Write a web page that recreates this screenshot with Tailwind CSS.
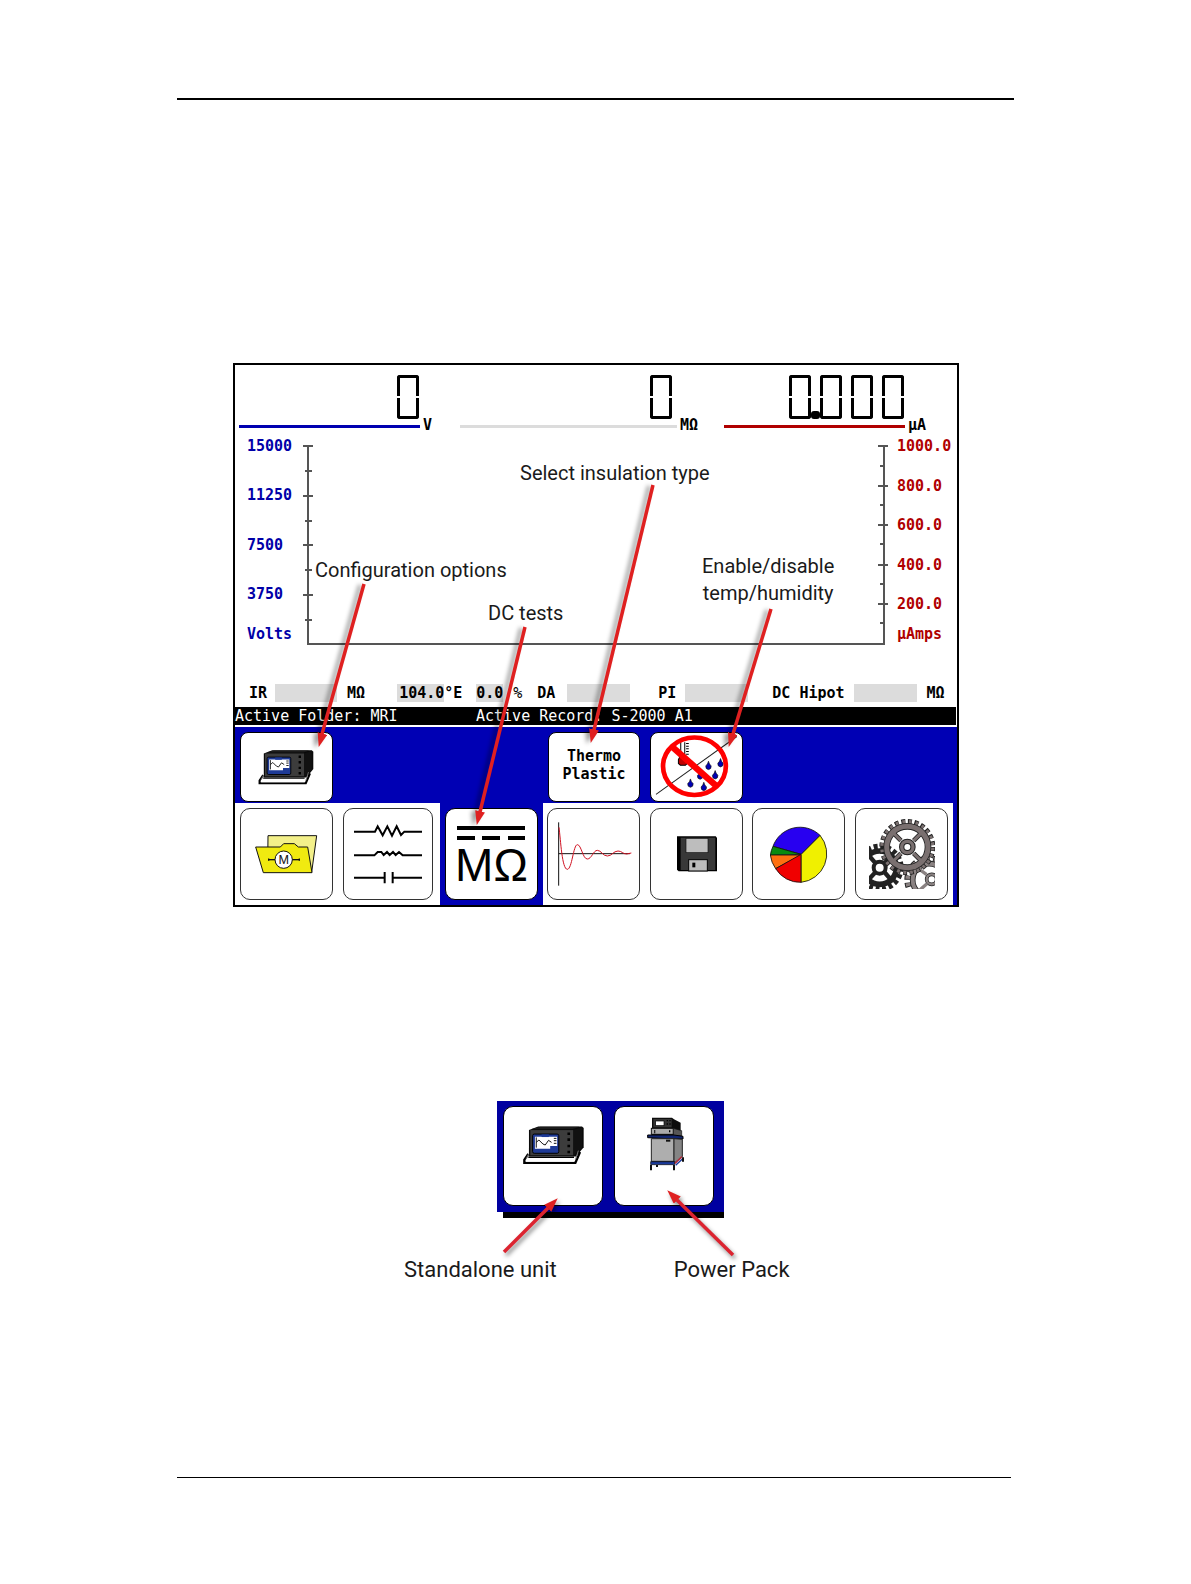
<!DOCTYPE html>
<html lang="en">
<head>
<meta charset="utf-8">
<meta name="viewport" content="width=device-width, initial-scale=1">
<title>DC tests screen</title>
<script src="https://cdn.jsdelivr.net/npm/@tailwindcss/browser@4"></script>
</head>
<body class="bg-white text-black">
<!-- Shared drawings -->
<svg class="absolute w-0 h-0" aria-hidden="true">
  <defs>
    <symbol id="tester" viewBox="130 103 184 120">
      <path d="M148 118 L176 107 H308 L313 112 V170 L290 198 H148Z" fill="#0a0a0a"/>
      <rect x="152" y="118" width="130" height="76" fill="#3c3c3c"/>
      <path d="M282 118 L308 110 V172 L282 196Z" fill="#111"/>
      <path d="M156 115 H280 L300 108 H182Z" fill="#1b1b1b"/>
      <rect x="159" y="130" width="79" height="58" rx="5" fill="#1e3a96" stroke="#000" stroke-width="3"/>
      <path d="M166 138 H233 V166 H212 V174 H166Z" fill="#fff"/>
      <path d="M186 131 h22 v8 h-22z" fill="#1e3a96"/>
      <path d="M170 140 V171 M170 155 L178 148 L190 160 L197 163 L207 149 L216 155" fill="none" stroke="#111" stroke-width="3"/>
      <path d="M223 143 h8 M223 150 h8 M223 158 h8" stroke="#111" stroke-width="3"/>
      <path d="M268 125 v8 M268 143 v8 M268 162 v8 M268 180 v8" stroke="#000" stroke-width="8"/>
      <path d="M146 190 L134 208 V217 H288 L302 184" fill="none" stroke="#000" stroke-width="7"/>
      <path d="M146 200 H284" stroke="#000" stroke-width="4"/>
      <path d="M139 209 H284" stroke="#fff" stroke-width="9"/>
      <path d="M147 190 l-8 16 M297 180 l-9 28" stroke="#777" stroke-width="3"/>
    </symbol>
    <marker id="head" markerUnits="userSpaceOnUse" markerWidth="16" markerHeight="12" refX="13" refY="5" orient="auto">
      <path d="M0 0 L14 5 L0 10Z" fill="#df2020"/>
    </marker>
  </defs>
</svg>

<div class="min-h-screen flex flex-col px-[177px] pt-[98px] pb-[106px]">
  <hr class="border-0 h-[2px] bg-black">

  <main>
    <figure class="relative mt-[263px] ml-14 max-w-[726px] border-2 border-black bg-white font-['DejaVu_Sans_Mono',monospace] text-[15px] leading-[18px] font-bold">

      <!-- Meters -->
      <section class="grid grid-cols-[221fr_264fr_233fr] pt-[10px] pl-[4px]">
        <div class="flex items-end">
          <div class="w-[181px] mb-[6px]">
            <div class="flex justify-end pr-[1px]" role="img" aria-label="0">
              <div class="w-[22px] h-11 flex flex-col gap-[2px]"><i class="flex-1 border-3 border-b-0 border-black rounded-t-[3px]"></i><i class="flex-1 border-3 border-t-0 border-black rounded-b-[3px]"></i></div>
            </div>
            <div class="mt-[6px] h-[3px] bg-[#0000b0]"></div>
          </div>
          <span class="ml-[3px]">V</span>
        </div>
        <div class="flex items-end">
          <div class="w-[217px] mb-[6px]">
            <div class="flex justify-end pr-[5px]" role="img" aria-label="0">
              <div class="w-[22px] h-11 flex flex-col gap-[2px]"><i class="flex-1 border-3 border-b-0 border-black rounded-t-[3px]"></i><i class="flex-1 border-3 border-t-0 border-black rounded-b-[3px]"></i></div>
            </div>
            <div class="mt-[6px] h-[3px] bg-[#dcdcdc]"></div>
          </div>
          <span class="ml-[3px]">MΩ</span>
        </div>
        <div class="flex items-end">
          <div class="w-[181px] mb-[6px]">
            <div class="relative flex justify-end gap-[9px] pr-[1px]" role="img" aria-label="0.000">
              <div class="w-[22px] h-11 flex flex-col gap-[2px]"><i class="flex-1 border-3 border-b-0 border-black rounded-t-[3px]"></i><i class="flex-1 border-3 border-t-0 border-black rounded-b-[3px]"></i></div>
              <div class="w-[22px] h-11 flex flex-col gap-[2px]"><i class="flex-1 border-3 border-b-0 border-black rounded-t-[3px]"></i><i class="flex-1 border-3 border-t-0 border-black rounded-b-[3px]"></i></div>
              <div class="w-[22px] h-11 flex flex-col gap-[2px]"><i class="flex-1 border-3 border-b-0 border-black rounded-t-[3px]"></i><i class="flex-1 border-3 border-t-0 border-black rounded-b-[3px]"></i></div>
              <div class="w-[22px] h-11 flex flex-col gap-[2px]"><i class="flex-1 border-3 border-b-0 border-black rounded-t-[3px]"></i><i class="flex-1 border-3 border-t-0 border-black rounded-b-[3px]"></i></div>
              <b class="absolute right-[85px] bottom-0 w-[9px] h-2 rounded-[3px] bg-black"></b>
            </div>
            <div class="mt-[6px] h-[3px] bg-[#b00000]"></div>
          </div>
          <span class="ml-[3px]">µA</span>
        </div>
      </section>

      <!-- Chart -->
      <section class="flex items-start mt-[3px] pl-3">
        <div class="w-[54px] text-[#0000a8]">
          <div class="h-[166px] flex flex-col justify-between"><span>15000</span><span>11250</span><span>7500</span><span>3750</span></div>
          <div class="mt-[22px]">Volts</div>
        </div>
        <svg class="flex-1 h-[211px]" viewBox="301 437 589 211" preserveAspectRatio="none" fill="none" stroke="#555" stroke-width="2" shape-rendering="crispEdges" role="img" aria-label="Voltage and current axes">
          <path d="M308 446 V644 H884 V446"/>
          <path d="M303 446h10 M303 496h10 M303 545h10 M303 595h10 M305 471h7 M305 521h7 M305 570h7 M305 620h7"/>
          <path d="M878 446h10 M878 486h10 M878 525h10 M878 565h10 M878 604h10 M880 466h4 M880 505h4 M880 544h4 M880 584h4 M880 623h4"/>
        </svg>
        <div class="w-[67px] pl-[7px] text-[#b00000]">
          <div class="h-[176px] flex flex-col justify-between"><span>1000.0</span><span>800.0</span><span>600.0</span><span>400.0</span><span>200.0</span></div>
          <div class="mt-3">µAmps</div>
        </div>
      </section>

      <!-- Readings -->
      <section class="flex mt-9 pl-[14px] whitespace-nowrap">
        <span>IR</span><span class="ml-2 w-[62px] h-[18px] bg-[#dcdcdc]"></span><span class="ml-[10px]">MΩ</span>
        <span class="ml-8 w-[47px] pl-[2px] bg-[#dcdcdc]">104.0</span><span>°E</span>
        <span class="ml-[14px] w-[27px] bg-[#dcdcdc]">0.0</span><span class="ml-[10px] font-normal">%</span>
        <span class="ml-[15px]">DA</span><span class="ml-3 w-[63px] bg-[#dcdcdc]"></span>
        <span class="ml-7">PI</span><span class="ml-[9px] w-[63px] bg-[#dcdcdc]"></span>
        <span class="ml-6">DC Hipot</span><span class="ml-[9px] w-[63px] bg-[#dcdcdc]"></span>
        <span class="ml-[10px]">MΩ</span>
      </section>

      <!-- Status line -->
      <section class="flex mt-[5px] mr-px h-[18px] bg-black text-white font-normal">
        <span class="w-[241px]">Active Folder: MRI</span><span>Active Record: S-2000 A1</span>
      </section>

      <!-- Option buttons -->
      <div class="mt-[2px] bg-[#0000b4]">
        <div class="grid grid-cols-7 mr-1 h-[76px]">
          <div class="p-[5px] pb-1"><button class="size-full flex items-center justify-center rounded-lg border border-black bg-white" aria-label="Standalone unit configuration"><svg class="w-14 h-9"><use href="#tester"/></svg></button></div>
          <div class="col-start-4 p-[5px] pb-1"><button class="size-full rounded-lg border border-black bg-white pb-1">Thermo<br>Plastic</button></div>
          <div class="p-[5px] pb-1"><button class="size-full rounded-lg border border-black bg-white overflow-hidden" aria-label="Temperature and humidity disabled">
            <svg class="size-full" viewBox="33 39 271 196">
              <path d="M48 218 L290 45" stroke="#222" stroke-width="3"/>
              <path d="M122 62 V106 M134 62 V106" stroke="#000" stroke-width="3"/>
              <path d="M138 66h8 M138 74h8 M138 82h8 M138 90h8 M138 98h8" stroke="#000" stroke-width="3"/>
              <path d="M119 106 h18 l4 8 v12 l-5 5 h-15 l-6 -5 v-12z" fill="#c00000" stroke="#000" stroke-width="3"/>
              <g fill="#0000b4" stroke="#111" stroke-width="2">
                <path id="drop" d="M151 172 q2 9 8 14 q1 10 -8 11 q-9 -1 -8 -11 q6 -5 8 -14z"/>
                <use href="#drop" x="40" y="10"/><use href="#drop" x="54" y="-53"/><use href="#drop" x="90" y="-61"/><use href="#drop" x="74" y="-25"/><use href="#drop" x="29" y="-24"/>
              </g>
              <ellipse cx="163" cy="134" rx="94" ry="86" fill="none" stroke="#f00" stroke-width="14"/>
              <path d="M94 74 L230 194" stroke="#f00" stroke-width="19"/>
            </svg></button></div>
        </div>
      </div>

      <!-- Mode tabs -->
      <nav class="bg-[#0000b4] pr-1 h-[102px]">
        <div class="grid grid-cols-7 h-full">
          <div class="bg-white p-[5px]"><button class="size-full flex items-center justify-center rounded-[10px] border border-[#333]" aria-label="Motor folder">
            <svg class="w-16 h-10" viewBox="69 342 192 120" stroke="#111" stroke-width="3">
              <path d="M111 347 H257 L242 457 L110 440Z" fill="#f3f08a"/>
              <path d="M74 381 H148 L158 371 H190 L202 381 H230 L243 458 H97Z" fill="#f0ea10"/>
              <path d="M112 419 H206" stroke-width="4"/><path d="M111 419h4 M203 419h4" stroke-width="7"/>
              <circle cx="158" cy="419" r="26" fill="#fff"/>
              <text x="158" y="432" text-anchor="middle" font-family="Liberation Sans, sans-serif" font-size="38" font-weight="400" fill="#111" stroke="none">M</text>
            </svg></button></div>
          <div class="bg-white p-[5px] pr-[7px]"><button class="size-full flex items-center justify-center rounded-[10px] border border-[#333]" aria-label="Passive components">
            <svg class="w-[68px] h-[60px]" viewBox="373 312 204 180" fill="none" stroke="#000" stroke-width="6">
              <path d="M373 335 H436 L444 319 L459 346 L473 319 L487 347 L501 319 L514 345 L524 335 H577"/>
              <path d="M373 406 H434 L444 396 L455 396 L462 405 L472 396 L480 405 L490 396 L498 405 L508 396 L519 406 H577"/>
              <path d="M373 473 H464 M490 473 H577"/><path d="M465 456 V490 M489 456 V490" stroke-width="6"/>
            </svg></button></div>
          <div class="p-[5px]"><button class="size-full flex flex-col items-center pt-4 rounded-[10px] border border-black bg-white font-['Liberation_Sans',sans-serif] font-normal">
            <svg class="w-[68px] h-[15px]" viewBox="0 0 68 15" stroke="#000" stroke-width="4" aria-hidden="true"><path d="M0 3H68 M0 13H18 M25 13H43 M51 13H68"/></svg>
            <span class="text-[46px] leading-[50px]">MΩ</span></button></div>
          <div class="bg-white p-[5px] pl-1"><button class="size-full flex items-center justify-center pl-1 rounded-[10px] border border-[#333]" aria-label="Surge waveform">
            <svg class="w-[74px] h-16" viewBox="368 306 222 192" fill="none" stroke-width="3">
              <path d="M370 307 V497 M370 401 H584" stroke="#111"/>
              <path d="M371 322 C376 360 380 448 396 448 C410 448 414 374 426 374 C438 374 442 417 456 417 C469 417 474 391 486 391 C498 391 502 408 516 408 C530 408 534 393 548 393 C560 393 562 402 574 402 L588 399" stroke="#d01020"/>
            </svg></button></div>
          <div class="bg-white p-[5px]"><button class="size-full flex items-center justify-center rounded-[10px] border border-[#333]" aria-label="Save">
            <svg class="w-10 h-9" viewBox="108 350 120 108">
              <path d="M108 351 H224 L228 355 V456 H113 L108 451Z" fill="#000"/><rect x="119" y="355" width="104" height="97" fill="#383838"/>
              <rect x="135" y="357" width="66" height="43" fill="#bdbdbd" stroke="#111" stroke-width="2"/>
              <rect x="143" y="421" width="56" height="34" fill="#bdbdbd" stroke="#000" stroke-width="3"/><rect x="154" y="430" width="9" height="14" fill="#000"/>
            </svg></button></div>
          <div class="bg-white p-[5px] pl-1"><button class="size-full flex items-center justify-center rounded-[10px] border border-[#333]" aria-label="Reports">
            <svg class="size-[58px]" viewBox="75 315 174 174" stroke="#111" stroke-width="2.5">
              <path d="M168 403 L225 346 A86 86 0 0 1 168 487Z" fill="#f0f000"/>
              <path d="M168 403 L84 379 A86 86 0 0 1 225 346Z" fill="#2800f0"/>
              <path d="M168 403 L76 406 A86 86 0 0 1 84 379Z" fill="#0a8a10"/>
              <path d="M168 405 L92 446 A86 86 0 0 1 76 405Z" fill="#ff7010"/>
              <path d="M168 403 V487 A86 86 0 0 1 92 446Z" fill="#f00000"/>
            </svg></button></div>
          <div class="bg-white p-[5px]"><button class="size-full flex items-center justify-center rounded-[10px] border border-[#333]" aria-label="Settings">
            <svg class="w-[66px] h-[70px]" viewBox="372 299 198 210" fill="none">
              <g stroke="#222">
                <circle cx="404" cy="445" r="64" stroke-width="16" stroke-dasharray="12 8.1"/>
                <circle cx="404" cy="445" r="50" stroke-width="17"/>
                <circle cx="404" cy="445" r="18" stroke-width="12"/>
                <path d="M392 432 L366 402 M418 432 L444 402 M392 458 L364 488 M418 458 L444 488" stroke-width="13"/>
              </g>
              <g>
                <circle cx="552" cy="482" r="64" stroke="#222" stroke-width="20" stroke-dasharray="13 9.3"/>
                <circle cx="552" cy="482" r="63" stroke="#8a8282" stroke-width="16" stroke-dasharray="9 13" stroke-dashoffset="-2"/>
                <circle cx="552" cy="482" r="49" stroke="#222" stroke-width="17"/><circle cx="552" cy="482" r="49" stroke="#8a8282" stroke-width="12"/>
                <circle cx="560" cy="480" r="15" stroke="#222" stroke-width="11"/><circle cx="560" cy="480" r="15" stroke="#8a8282" stroke-width="7"/>
                <path d="M545 466 L518 446 M545 494 L522 514" stroke="#8a8282" stroke-width="10"/>
              </g>
              <g>
                <circle cx="487" cy="383" r="75" stroke="#222" stroke-width="18" stroke-dasharray="12 7.6"/>
                <circle cx="487" cy="383" r="74" stroke="#7a7070" stroke-width="15" stroke-dasharray="8 11.4" stroke-dashoffset="-2"/>
                <circle cx="487" cy="383" r="62" stroke="#222" stroke-width="20"/>
                <path d="M468 364 L444 340 M506 364 L530 340 M468 402 L444 426 M506 402 L530 426" stroke="#222" stroke-width="14"/>
                <circle cx="487" cy="383" r="62" stroke="#7a7070" stroke-width="15"/>
                <path d="M468 364 L442 338 M506 364 L532 338 M468 402 L442 428 M506 402 L532 428" stroke="#7a7070" stroke-width="9"/>
                <circle cx="487" cy="383" r="17" fill="#fff" stroke="#222" stroke-width="16"/><circle cx="487" cy="383" r="17" stroke="#7a7070" stroke-width="10"/>
              </g>
            </svg></button></div>
        </div>
      </nav>

      <!-- Callouts -->
      <svg class="absolute inset-0 size-full pointer-events-none drop-shadow-[-4px_1px_2px_rgba(0,0,0,0.4)]" viewBox="235 365 722 540" fill="none" stroke="#df2020" stroke-width="3.5" aria-hidden="true">
        <path d="M364 584 L322 734" /><path d="M364 584 L319 746" stroke="none" marker-end="url(#head)"/>
        <path d="M525 627 L480 812"/><path d="M525 627 L477 824" stroke="none" marker-end="url(#head)"/>
        <path d="M653 485 L594 730"/><path d="M653 485 L591 742" stroke="none" marker-end="url(#head)"/>
        <path d="M771 609 L733 734"/><path d="M771 609 L729 746" stroke="none" marker-end="url(#head)"/>
      </svg>
      <div class="font-['Roboto',sans-serif] text-[20px] leading-[27px] font-normal text-[#1a1a1a] whitespace-nowrap">
        <span class="absolute left-[285px] top-[95px]">Select insulation type</span>
        <span class="absolute left-[80px] top-[192px]">Configuration options</span>
        <span class="absolute left-[253px] top-[235px]">DC tests</span>
        <span class="absolute left-[467px] top-[188px] text-center">Enable/disable<br>temp/humidity</span>
      </div>
    </figure>

    <!-- Unit selection -->
    <figure class="relative mt-[194px]">
      <div class="ml-[320px] w-[227px] pb-[6px] bg-[linear-gradient(#000,#000)] bg-no-repeat bg-[position:6px_0]">
        <div class="flex gap-[11px] pl-[6px] pt-[5px] pb-[6px] bg-[#0000a0]">
          <button class="size-[100px] flex items-start justify-center pt-[18px] rounded-[10px] border border-black bg-white" aria-label="Standalone unit"><svg class="w-[61px] h-10"><use href="#tester"/></svg></button>
          <button class="size-[100px] flex items-start justify-center pl-1 pt-[10px] rounded-[10px] border border-black bg-white" aria-label="Power Pack">
            <svg class="w-[38px] h-[54px]" viewBox="499 83 114 162">
              <path d="M514 85 H574 L580 90 L600 100 V138 H514Z" fill="#0c0c0c"/><rect x="518" y="89" width="55" height="25" fill="#333"/>
              <rect x="525" y="95" width="25" height="14" fill="#fff" stroke="#000" stroke-width="2"/>
              <path d="M560 92v4 M560 102v4 M568 92v4 M568 102v4" stroke="#000" stroke-width="4"/>
              <rect x="512" y="117" width="66" height="18" fill="#aaa" stroke="#111" stroke-width="3"/><path d="M522 123v4 M522 129v3 M567 123v6" stroke="#000" stroke-width="4"/>
              <path d="M578 117 L603 124 V140 H578Z" fill="#555" stroke="#111" stroke-width="2"/>
              <path d="M501 137 H580 L607 141 V149 H582 L501 145Z" fill="#10246e" stroke="#000" stroke-width="3"/>
              <path d="M512 148 H580 V216 H512Z" fill="#aeaeae" stroke="#222" stroke-width="3"/><path d="M580 148 L605 150 V202 L580 222Z" fill="#858585" stroke="#222" stroke-width="3"/>
              <rect x="556" y="151" width="13" height="6" fill="#111"/>
              <path d="M510 217 H582 V226 H510Z" fill="#1a3a9a" stroke="#000" stroke-width="2"/><path d="M583 222 L604 202" stroke="#b03040" stroke-width="5"/><path d="M585 228 L606 208" stroke="#1a3a9a" stroke-width="4"/>
              <path d="M511 227 V243 M580 227 V243 M607 204 V217 M529 227v6" stroke="#111" stroke-width="6"/>
            </svg></button>
        </div>
      </div>
      <svg class="absolute left-0 top-0 w-[837px] h-[183px] pointer-events-none drop-shadow-[2px_3px_2px_rgba(0,0,0,0.45)]" viewBox="177 1101 837 183" fill="none" stroke="#dc2430" stroke-width="3.5" aria-hidden="true">
        <path d="M504 1252 L548 1208"/><path d="M504 1252 L557 1199" stroke="none" marker-end="url(#head)"/>
        <path d="M733 1255 L677 1200"/><path d="M733 1255 L668 1191" stroke="none" marker-end="url(#head)"/>
      </svg>
      <figcaption class="flex gap-[117px] mt-[38px] pl-[227px] font-['Roboto',sans-serif] text-[22px] leading-[27px] text-[#1a1a1a] whitespace-nowrap">
        <span>Standalone unit</span><span>Power Pack</span>
      </figcaption>
    </figure>
  </main>

  <hr class="mt-auto mr-[3px] border-0 h-px bg-black">
</div>
</body>
</html>
